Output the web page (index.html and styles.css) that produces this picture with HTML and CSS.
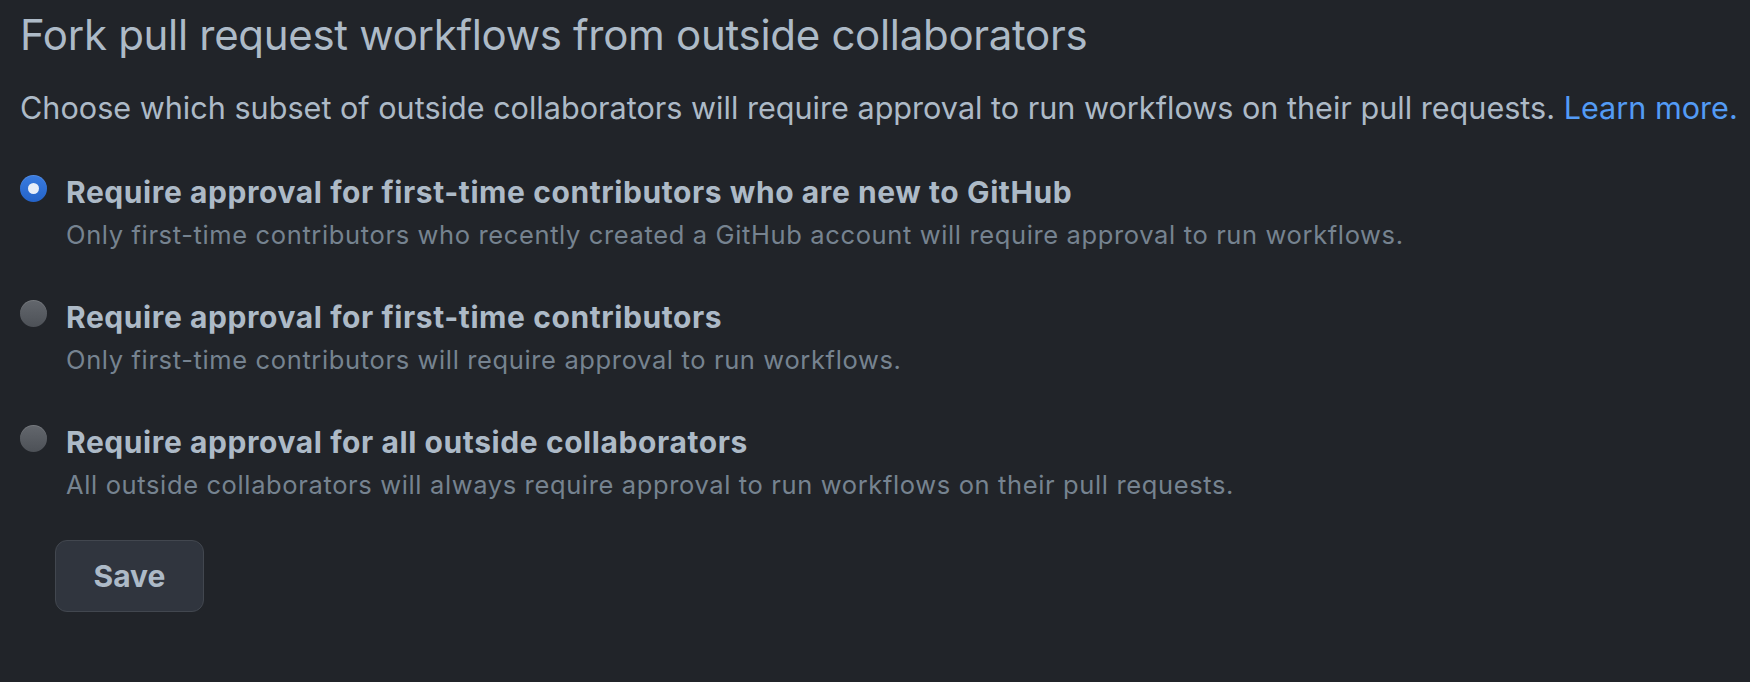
FILE: index.html
```html
<!DOCTYPE html>
<html lang="en">
<head>
<meta charset="utf-8">
<title>Fork pull request workflows</title>
<link rel="stylesheet" href="styles.css">
</head>
<body>
<main class="page">
  <h2 class="title">Fork pull request workflows from outside collaborators</h2>
  <p class="lead">Choose which subset of outside collaborators will require approval to run workflows on their pull requests. <a class="link" href="#">Learn more.</a></p>
  <form class="options">
    <label class="option">
      <input class="radio" type="radio" name="approval" checked>
      <span class="option-text">
        <span class="option-label">Require approval for first-time contributors who are new to GitHub</span>
        <span class="option-note">Only first-time contributors who recently created a GitHub account will require approval to run workflows.</span>
      </span>
    </label>
    <label class="option">
      <input class="radio" type="radio" name="approval">
      <span class="option-text">
        <span class="option-label">Require approval for first-time contributors</span>
        <span class="option-note">Only first-time contributors will require approval to run workflows.</span>
      </span>
    </label>
    <label class="option">
      <input class="radio" type="radio" name="approval">
      <span class="option-text">
        <span class="option-label">Require approval for all outside collaborators</span>
        <span class="option-note">All outside collaborators will always require approval to run workflows on their pull requests.</span>
      </span>
    </label>
    <div class="actions">
      <button class="btn" type="button">Save</button>
    </div>
  </form>
</main>
</body>
</html>
```
FILE: styles.css
```css
html, body {
  margin: 0;
  padding: 0;
  background: #212429;
}
body {
  font-family: Inter, "Noto Sans", sans-serif;
  color: #adbac7;
}
.page {
  padding: 9px 0 0 20px;
  display: flex;
  flex-direction: column;
}
.title {
  margin: 0;
  font-size: 42px;
  line-height: 52px;
  font-weight: 400;
  letter-spacing: -0.3px;
  color: #adbac7;
}
.lead {
  margin: 27px 0 0;
  font-size: 30.6px;
  line-height: 40px;
  white-space: nowrap;
  color: #adbac7;
}
.link {
  color: #539bf5;
  text-decoration: none;
}
.options {
  margin: 46px 0 0;
  display: flex;
  flex-direction: column;
  gap: 47px;
}
.option {
  display: flex;
  align-items: flex-start;
  gap: 19px;
}
.radio {
  appearance: none;
  -webkit-appearance: none;
  margin: 1px 0 0;
  width: 27px;
  height: 27px;
  border-radius: 50%;
  flex: none;
  background: linear-gradient(#63676d, #4d5157);
  box-shadow: inset 0 1px 0 rgba(255,255,255,0.12);
  display: grid;
  place-items: center;
}
.radio:checked {
  background: linear-gradient(#3a7ce0, #2463c8);
}
.radio:checked::after {
  content: "";
  width: 11px;
  height: 11px;
  border-radius: 50%;
  background: #e8eef8;
}
.option-text {
  display: flex;
  flex-direction: column;
  gap: 8px;
}
.option-label {
  font-size: 30px;
  line-height: 36px;
  font-weight: 700;
  letter-spacing: 0.58px;
  color: #adbac7;
}
.option-note {
  font-size: 25.5px;
  line-height: 34px;
  letter-spacing: 0.63px;
  color: #768390;
}
.actions {
  margin-top: -9px;
  padding-left: 35px;
}
.btn {
  width: 149px;
  height: 72px;
  border: 1px solid #42474f;
  border-radius: 12px;
  background: #30353e;
  color: #adbac7;
  font-family: Inter, "Noto Sans", sans-serif;
  font-size: 30px;
  font-weight: 700;
}
```
